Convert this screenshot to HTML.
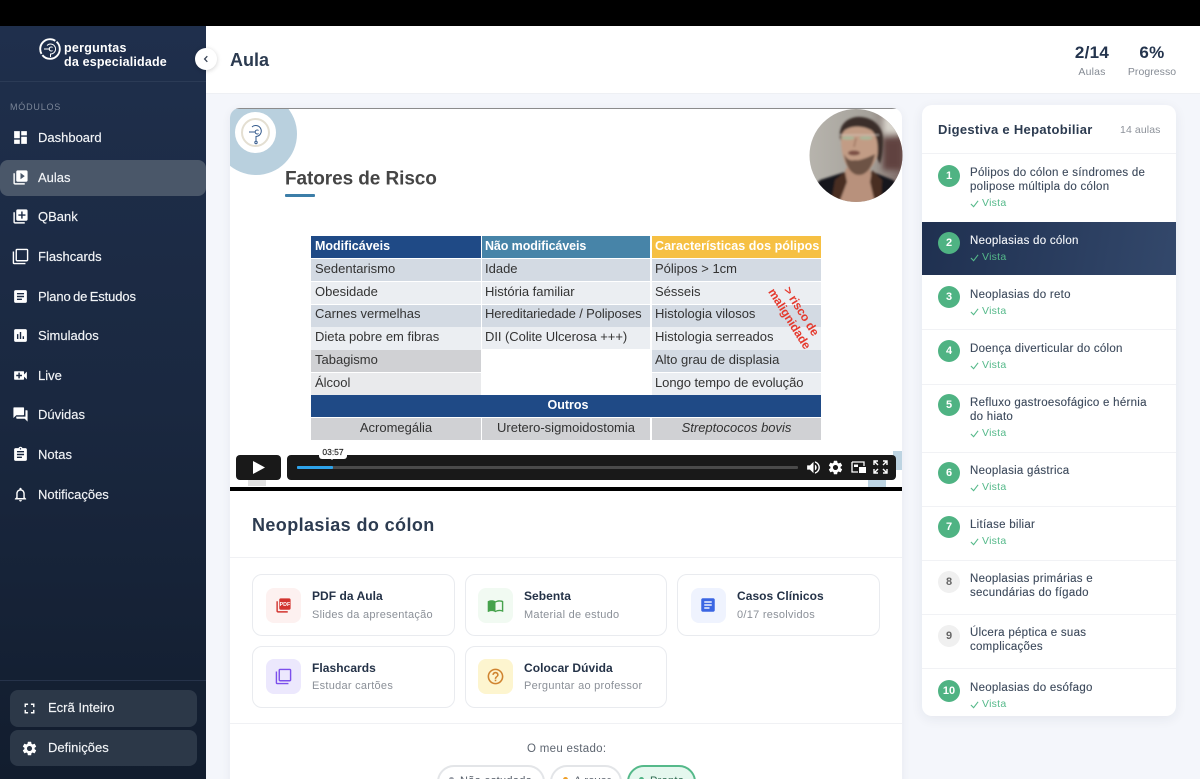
<!DOCTYPE html>
<html lang="pt"><head><meta charset="utf-8"><title>Aula</title>
<style>
*{box-sizing:border-box;margin:0;padding:0}
html,body{width:1200px;height:779px;overflow:hidden;background:#f4f6fb;font-family:"Liberation Sans",sans-serif}
#r{position:relative;width:1200px;height:779px;overflow:hidden}
.a{position:absolute}
.t{position:absolute;white-space:nowrap;line-height:20px;height:20px}
.nav{color:#f2f4f7;font-size:13px;letter-spacing:0;-webkit-text-stroke:.15px #f2f4f7}
.ic{position:absolute;width:17px;height:17px;fill:#fff}
.tb{position:absolute;white-space:nowrap;font-size:13px;color:#333;line-height:23px;height:23px;padding-left:4px}
.c{position:absolute;background:#d3dae3}
.btn{position:absolute;background:#fff;border:1px solid #e9ebef;border-radius:10px;width:203px;height:62px}
.bi{position:absolute;width:35px;height:35px;border-radius:8px}
.bt{position:absolute;white-space:nowrap;font-size:12px;font-weight:bold;color:#243247;line-height:20px;letter-spacing:.05px}
.bs{position:absolute;white-space:nowrap;font-size:11px;color:#8b9098;line-height:20px;letter-spacing:.27px}
.lt{position:absolute;white-space:nowrap;font-size:11.5px;color:#3d4a5c;line-height:14px;left:970px;letter-spacing:.27px;-webkit-text-stroke:.12px #3d4a5c}
.v{position:absolute;white-space:nowrap;font-size:10.5px;color:#55b98a;line-height:14px;left:982px;letter-spacing:.25px}
.ck{position:absolute;left:970px;width:9px;height:9px;fill:none;stroke:#55b98a;stroke-width:1.2}
.n{position:absolute;left:938px;width:22px;height:22px;border-radius:50%;background:#4fb383;color:#fff;font-size:11px;font-weight:bold;text-align:center;line-height:22px}
.n.g{background:#f0f0f0;color:#666}
.ln{position:absolute;left:922px;width:254px;height:1px;background:#f1f2f5}
</style></head><body><div id="r">

<div class="a" style="left:0;top:0;width:1200px;height:26px;background:#000"></div>

<!-- header -->
<div class="a" style="left:206px;top:26px;width:994px;height:68px;background:#fff;border-bottom:1px solid #eef0f4"></div>
<div class="t" style="left:230px;top:50px;font-size:18px;font-weight:bold;color:#2c3b50">Aula</div>
<div class="t" style="left:1062px;width:60px;text-align:center;top:43px;font-size:17px;font-weight:bold;color:#24344d;letter-spacing:.3px">2/14</div>
<div class="t" style="left:1062px;width:60px;text-align:center;top:62px;font-size:10.5px;color:#858b94;letter-spacing:.2px">Aulas</div>
<div class="t" style="left:1122px;width:60px;text-align:center;top:43px;font-size:17px;font-weight:bold;color:#24344d;letter-spacing:.3px">6%</div>
<div class="t" style="left:1122px;width:60px;text-align:center;top:62px;font-size:10.5px;color:#858b94;letter-spacing:.05px">Progresso</div>

<!-- sidebar -->
<div class="a" style="left:0;top:26px;width:206px;height:753px;background:linear-gradient(180deg,#1f2f4c 0%,#1a2840 50%,#121d2e 100%)"></div>
<div class="a" style="left:0;top:81px;width:206px;height:1px;background:#2b3b56"></div>
<svg class="a" style="left:38px;top:37px" width="24" height="24" viewBox="0 0 24 24" fill="none" stroke="#fff"><circle cx="12" cy="12" r="9.8" stroke-width="1.9" stroke-dasharray="24 1.5 26 1.5"/><path d="M9 8.5a5 5 0 1 1 3.5 8.5V20M6 12h6M14.5 10.5a2 2 0 1 0 0 3" stroke-width="1"/></svg>
<div class="t" style="left:64px;top:38px;font-size:12.5px;font-weight:bold;color:#fff;letter-spacing:.25px">perguntas</div>
<div class="t" style="left:64px;top:52px;font-size:12.5px;font-weight:bold;color:#fff;letter-spacing:.18px">da especialidade</div>
<div class="a" style="left:195px;top:48px;width:22px;height:22px;border-radius:50%;background:#fff;box-shadow:0 1px 5px rgba(0,0,0,.18)"></div>
<svg class="a" style="left:202px;top:55px" width="8" height="8" viewBox="0 0 8 8" fill="none" stroke="#3a4557" stroke-width="1.3"><path d="M5.3 1.2 2.6 4l2.7 2.8"/></svg>
<div class="t" style="left:10px;top:97px;font-size:9px;color:#7b8698;letter-spacing:.8px">MÓDULOS</div>

<div class="a" style="left:0;top:160px;width:206px;height:36px;border-radius:8px;background:#4a5769"></div>

<svg class="ic" style="left:12px;top:129px" viewBox="0 0 24 24"><path d="M3 13h8V3H3v10zm0 8h8v-6H3v6zm10 0h8V11h-8v10zm0-18v6h8V3h-8z"/></svg>
<div class="t nav" style="left:38px;top:128px">Dashboard</div>
<svg class="ic" style="left:12px;top:169px" viewBox="0 0 24 24"><path d="M4 6H2v14c0 1.1.9 2 2 2h14v-2H4V6zm16-4H8c-1.1 0-2 .9-2 2v12c0 1.1.9 2 2 2h12c1.1 0 2-.9 2-2V4c0-1.1-.9-2-2-2zm-8 12.5v-9l6 4.5-6 4.5z"/></svg>
<div class="t nav" style="left:38px;top:168px">Aulas</div>
<svg class="ic" style="left:12px;top:208px" viewBox="0 0 24 24"><path d="M4 6H2v14c0 1.1.9 2 2 2h14v-2H4V6zm16-4H8c-1.1 0-2 .9-2 2v12c0 1.1.9 2 2 2h12c1.1 0 2-.9 2-2V4c0-1.1-.9-2-2-2zm-1 9h-4v4h-2v-4H9V9h4V5h2v4h4v2z"/></svg>
<div class="t nav" style="left:38px;top:207px">QBank</div>
<svg class="ic" style="left:12px;top:248px" viewBox="0 0 24 24"><path d="M3 5H1v16c0 1.1.9 2 2 2h16v-2H3V5zm18-4H7c-1.1 0-2 .9-2 2v14c0 1.1.9 2 2 2h14c1.1 0 2-.9 2-2V3c0-1.1-.9-2-2-2zm0 16H7V3h14v14z"/></svg>
<div class="t nav" style="left:38px;top:247px">Flashcards</div>
<svg class="ic" style="left:12px;top:288px" viewBox="0 0 24 24"><path d="M19 3H5c-1.1 0-2 .9-2 2v14c0 1.1.9 2 2 2h14c1.1 0 2-.9 2-2V5c0-1.1-.9-2-2-2zm-5 14H7v-2h7v2zm3-4H7v-2h10v2zm0-4H7V7h10v2z"/></svg>
<div class="t nav" style="left:38px;top:287px;letter-spacing:-.13px;word-spacing:-1px">Plano de Estudos</div>
<svg class="ic" style="left:12px;top:327px" viewBox="0 0 24 24"><path d="M19 3H5c-1.1 0-2 .9-2 2v14c0 1.1.9 2 2 2h14c1.1 0 2-.9 2-2V5c0-1.1-.9-2-2-2zM9 17H7v-7h2v7zm4 0h-2V7h2v10zm4 0h-2v-4h2v4z"/></svg>
<div class="t nav" style="left:38px;top:326px">Simulados</div>
<svg class="ic" style="left:12px;top:367px" viewBox="0 0 24 24"><path d="M17 10.5V7c0-.55-.45-1-1-1H4c-.55 0-1 .45-1 1v10c0 .55.45 1 1 1h12c.55 0 1-.45 1-1v-3.5l4 4v-11l-4 4zM14 13h-3v3H9v-3H6v-2h3V8h2v3h3v2z"/></svg>
<div class="t nav" style="left:38px;top:366px">Live</div>
<svg class="ic" style="left:12px;top:406px" viewBox="0 0 24 24"><path d="M21 6h-2v9H6v2c0 .55.45 1 1 1h11l4 4V7c0-.55-.45-1-1-1zm-4 6V3c0-.55-.45-1-1-1H3c-.55 0-1 .45-1 1v14l4-4h10c.55 0 1-.45 1-1z"/></svg>
<div class="t nav" style="left:38px;top:405px">Dúvidas</div>
<svg class="ic" style="left:12px;top:446px" viewBox="0 0 24 24"><path d="M19 3h-4.18C14.4 1.84 13.3 1 12 1c-1.3 0-2.4.84-2.82 2H5c-1.1 0-2 .9-2 2v14c0 1.1.9 2 2 2h14c1.1 0 2-.9 2-2V5c0-1.1-.9-2-2-2zm-7 0c.55 0 1 .45 1 1s-.45 1-1 1-1-.45-1-1 .45-1 1-1zm2 14H7v-2h7v2zm3-4H7v-2h10v2zm0-4H7V7h10v2z"/></svg>
<div class="t nav" style="left:38px;top:445px">Notas</div>
<svg class="ic" style="left:12px;top:486px" viewBox="0 0 24 24"><path d="M12 22c1.1 0 2-.9 2-2h-4c0 1.1.9 2 2 2zm6-6v-5c0-3.07-1.63-5.64-4.5-6.32V4c0-.83-.67-1.5-1.5-1.5s-1.5.67-1.5 1.5v.68C7.64 5.36 6 7.92 6 11v5l-2 2v1h16v-1l-2-2zm-2 1H8v-6c0-2.48 1.51-4.5 4-4.5s4 2.02 4 4.5v6z"/></svg>
<div class="t nav" style="left:38px;top:485px">Notificações</div>

<div class="a" style="left:0;top:680px;width:206px;height:1px;background:#26334a"></div>
<div class="a" style="left:10px;top:690px;width:187px;height:37px;border-radius:8px;background:#2c3848"></div>
<div class="a" style="left:10px;top:730px;width:187px;height:36px;border-radius:8px;background:#2c3848"></div>
<svg class="ic" style="left:21px;top:700px" viewBox="0 0 24 24"><path d="M7 14H5v5h5v-2H7v-3zm-2-4h2V7h3V5H5v5zm12 7h-3v2h5v-5h-2v3zM14 5v2h3v3h2V5h-5z"/></svg>
<div class="t nav" style="left:48px;top:698px">Ecrã Inteiro</div>
<svg class="ic" style="left:21px;top:740px" viewBox="0 0 24 24"><path d="M19.14 12.94c.04-.3.06-.61.06-.94 0-.32-.02-.64-.07-.94l2.03-1.58a.49.49 0 0 0 .12-.61l-1.92-3.32a.488.488 0 0 0-.59-.22l-2.39.96c-.5-.38-1.03-.7-1.62-.94l-.36-2.54a.484.484 0 0 0-.48-.41h-3.84c-.24 0-.43.17-.47.41l-.36 2.54c-.59.24-1.13.57-1.62.94l-2.39-.96c-.22-.08-.47 0-.59.22L2.74 8.87c-.12.21-.08.47.12.61l2.03 1.58c-.05.3-.09.63-.09.94s.02.64.07.94l-2.03 1.58a.49.49 0 0 0-.12.61l1.92 3.32c.12.22.37.29.59.22l2.39-.96c.5.38 1.03.7 1.62.94l.36 2.54c.05.24.24.41.48.41h3.84c.24 0 .44-.17.47-.41l.36-2.54c.59-.24 1.13-.56 1.62-.94l2.39.96c.22.08.47 0 .59-.22l1.92-3.32c.12-.22.07-.47-.12-.61l-2.01-1.58zM12 15.6c-1.98 0-3.6-1.62-3.6-3.6s1.62-3.6 3.6-3.6 3.6 1.62 3.6 3.6-1.62 3.6-3.6 3.6z"/></svg>
<div class="t nav" style="left:48px;top:738px">Definições</div>

<!-- main card -->
<div class="a" style="left:230px;top:108px;width:672px;height:690px;background:#fff;border-radius:10px 10px 0 0;box-shadow:0 2px 10px rgba(30,40,70,.06);overflow:hidden">
  <div class="a" style="left:-15px;top:-15px;width:82px;height:82px;border-radius:50%;background:#b9d0de"></div>
  <div class="a" style="left:5px;top:4px;width:41px;height:41px;border-radius:50%;background:#fff"></div>
  <div class="a" style="left:11px;top:10px;width:29px;height:29px;border-radius:50%;border:2.5px solid #e4dfd2"></div>
  <svg class="a" style="left:14px;top:12px" width="24" height="26" viewBox="0 0 24 26" fill="none" stroke="#33598c" stroke-width="1"><path d="M8 7a5.5 5.5 0 1 1 4 9.5V21M5 12h6M14.5 10.5a2 2 0 1 0 0 3"/><circle cx="12" cy="22.5" r="1.2"/></svg>
  <div class="a" style="left:0;top:0;width:672px;height:1px;background:#8c8c8c"></div>
</div>
<div class="t" style="left:285px;top:168.5px;font-size:19px;font-weight:bold;color:#454545;letter-spacing:-.08px;transform:translateY(.5px)">Fatores de Risco</div>
<div class="a" style="left:285px;top:194px;width:30px;height:3px;border-radius:1px;background:#3c7ea8"></div>

<!-- avatar -->
<svg class="a" style="left:809px;top:108px" width="94" height="95" viewBox="0 0 94 95">
<defs>
<clipPath id="cp"><circle cx="47" cy="47.5" r="46.5"/></clipPath>
<filter id="b1" x="-30%" y="-30%" width="160%" height="160%"><feGaussianBlur stdDeviation="1"/></filter>
<filter id="b2" x="-30%" y="-30%" width="160%" height="160%"><feGaussianBlur stdDeviation="3"/></filter>
<linearGradient id="bg" x1="0" x2="1" y1="0" y2="0"><stop offset="0" stop-color="#b7b4ad"/><stop offset=".65" stop-color="#a5a19a"/><stop offset="1" stop-color="#7d6864"/></linearGradient>
</defs>
<g clip-path="url(#cp)">
<rect width="94" height="95" fill="url(#bg)"/>
<rect x="74" y="30" width="20" height="32" fill="#61423f" filter="url(#b2)"/>
<rect x="74" y="8" width="20" height="18" fill="#d7d3cb" filter="url(#b2)"/>
<g filter="url(#b1)">
<path d="M0 84 11 72 36 64H64L84 72 94 82V95H0Z" fill="#14171f"/>
<path d="M37 60H61L64 75 66 95H30L34 75Z" fill="#b8917b"/>
<path d="M36 64 26 72 22 95H30L38 74Z" fill="#4a2f22"/>
<path d="M63 62 73 72 72 95H66L61 74Z" fill="#4a2f22"/>
<path d="M32 30C32 16 40 12 52 12 64 12 70 22 70 34 70 50 62 66 50 66 38 66 32 50 32 30Z" fill="#c29c85"/>
<path d="M35 46C38 52 42 53 46 52 50 53 58 50 66 46 64 58 58 67 50 67 42 67 37 58 35 46Z" fill="#6d5344"/>
<path d="M31 30C29 16 40 8 52 9 66 10 75 20 74 34 74 42 73 50 71 56L68 50C70 38 68 26 62 22 52 17 42 18 36 22 33 25 32 27 32 33Z" fill="#3a2f29"/>
<ellipse cx="45" cy="45" rx="6" ry="2.5" fill="#7c4f44"/>
<ellipse cx="39" cy="30" rx="6.5" ry="1.8" fill="#a9b89a"/><ellipse cx="57" cy="30" rx="6.5" ry="1.8" fill="#a9b89a"/>
<path d="M31 27H70" stroke="#d9cfc6" stroke-width=".8"/>
<path d="M47 30 45 39" stroke="#a9816c" stroke-width="2"/>
</g>
</g>
</svg>

<!-- slide table -->
<div class="c" style="left:311px;top:236px;width:170px;height:22px;background:#1f4a86"></div>
<div class="c" style="left:482px;top:236px;width:168px;height:22px;background:#4784a8"></div>
<div class="c" style="left:652px;top:236px;width:169px;height:22px;background:#f6c043"></div>
<div class="tb" style="left:311px;top:235px;color:#fff;font-weight:bold;font-size:12.5px">Modificáveis</div>
<div class="tb" style="left:481px;top:235px;color:#fff;font-weight:bold;font-size:12.5px;letter-spacing:-.1px">Não modificáveis</div>
<div class="tb" style="left:651px;top:235px;color:#fff;font-weight:bold;font-size:12.5px;letter-spacing:.04px">Características dos pólipos</div>

<div class="c" style="left:311px;top:259px;width:170px;height:22px"></div>
<div class="c" style="left:482px;top:259px;width:168px;height:22px"></div>
<div class="c" style="left:652px;top:259px;width:169px;height:22px"></div>
<div class="c" style="left:311px;top:282px;width:170px;height:22px;background:#ebeef2"></div>
<div class="c" style="left:482px;top:282px;width:168px;height:22px;background:#ebeef2"></div>
<div class="c" style="left:652px;top:282px;width:169px;height:22px;background:#ebeef2"></div>
<div class="c" style="left:311px;top:305px;width:170px;height:22px"></div>
<div class="c" style="left:482px;top:305px;width:168px;height:22px"></div>
<div class="c" style="left:652px;top:305px;width:169px;height:22px"></div>
<div class="c" style="left:311px;top:327px;width:170px;height:23px;background:#ebeef2"></div>
<div class="c" style="left:482px;top:327px;width:168px;height:22px;background:#ebeef2"></div>
<div class="c" style="left:652px;top:327px;width:169px;height:23px;background:#ebeef2"></div>
<div class="c" style="left:311px;top:350px;width:170px;height:22px;background:#d0d1d4"></div>
<div class="c" style="left:652px;top:350px;width:169px;height:22px"></div>
<div class="c" style="left:311px;top:373px;width:170px;height:22px;background:#e9eaec"></div>
<div class="c" style="left:652px;top:373px;width:169px;height:22px;background:#ebeef2"></div>
<div class="c" style="left:311px;top:395px;width:510px;height:22px;background:#1f4a86"></div>
<div class="c" style="left:311px;top:418px;width:170px;height:22px;background:#d0d1d4"></div>
<div class="c" style="left:482px;top:418px;width:168px;height:22px;background:#d0d1d4"></div>
<div class="c" style="left:652px;top:418px;width:169px;height:22px;background:#d0d1d4"></div>

<div class="tb" style="left:311px;top:257px">Sedentarismo</div>
<div class="tb" style="left:311px;top:280px">Obesidade</div>
<div class="tb" style="left:311px;top:302px">Carnes vermelhas</div>
<div class="tb" style="left:311px;top:325px">Dieta pobre em fibras</div>
<div class="tb" style="left:311px;top:348px">Tabagismo</div>
<div class="tb" style="left:311px;top:371px">Álcool</div>
<div class="tb" style="left:481px;top:257px">Idade</div>
<div class="tb" style="left:481px;top:280px">História familiar</div>
<div class="tb" style="left:481px;top:302px;letter-spacing:-.12px">Hereditariedade / Poliposes</div>
<div class="tb" style="left:481px;top:325px;letter-spacing:-.05px">DII (Colite Ulcerosa +++)</div>
<div class="tb" style="left:651px;top:257px">Pólipos &gt; 1cm</div>
<div class="tb" style="left:651px;top:280px">Sésseis</div>
<div class="tb" style="left:651px;top:302px">Histologia vilosos</div>
<div class="tb" style="left:651px;top:325px">Histologia serreados</div>
<div class="tb" style="left:651px;top:348px">Alto grau de displasia</div>
<div class="tb" style="left:651px;top:371px;letter-spacing:-.05px">Longo tempo de evolução</div>
<div class="tb" style="left:311px;width:510px;text-align:center;top:394px;color:#fff;font-weight:bold;font-size:12.5px">Outros</div>
<div class="tb" style="left:311px;width:170px;text-align:center;top:416px;padding:0">Acromegália</div>
<div class="tb" style="left:482px;width:168px;text-align:center;top:416px;padding:0">Uretero-sigmoidostomia</div>
<div class="tb" style="left:652px;width:169px;text-align:center;top:416px;padding:0;font-style:italic">Streptococos bovis</div>
<div class="a" style="left:743px;top:301px;width:105px;transform:rotate(58deg);transform-origin:center;text-align:center;color:#e5392d;font-weight:bold;font-size:12px;line-height:14px;letter-spacing:-.1px">&gt; risco de<br>malignidade</div>

<!-- player -->
<div class="a" style="left:248px;top:478px;width:18px;height:8px;background:#e1e1e1"></div>
<div class="a" style="left:868px;top:474px;width:18px;height:13px;background:#bdd4e2"></div>
<div class="a" style="left:893px;top:451px;width:9px;height:19px;background:#bdd4e2"></div>
<div class="a" style="left:230px;top:487px;width:672px;height:4px;background:#000"></div>
<div class="a" style="left:236px;top:455px;width:45px;height:25px;border-radius:4px;background:#191919"></div>
<svg class="a" style="left:252px;top:460px" width="14" height="15" viewBox="0 0 14 15"><path d="M1 1 13 7.5 1 14Z" fill="#fff"/></svg>
<div class="a" style="left:287px;top:455px;width:609px;height:25px;border-radius:4px;background:#191919"></div>
<div class="a" style="left:297px;top:466px;width:501px;height:3px;background:#4a4a4a;border-radius:1px"></div>
<div class="a" style="left:297px;top:466px;width:36px;height:3px;background:#2ea3ea;border-radius:1px"></div>
<div class="a" style="left:319px;top:446px;width:28px;height:13px;border-radius:3px;background:#fff"></div>
<div class="a" style="left:329px;top:457px;width:0;height:0;border-left:3px solid transparent;border-right:3px solid transparent;border-top:3px solid #fff"></div>
<div class="t" style="left:319px;width:28px;text-align:center;top:442px;font-size:8.5px;color:#222;-webkit-text-stroke:.15px #222">03:57</div>
<svg class="a" style="left:805px;top:459px;fill:#fff" width="17" height="17" viewBox="0 0 24 24"><path d="M3 9v6h4l5 5V4L7 9H3zm13.5 3c0-1.77-1.02-3.29-2.5-4.03v8.05c1.48-.73 2.5-2.25 2.5-4.02zM14 3.23v2.06c2.89.86 5 3.54 5 6.71s-2.11 5.85-5 6.71v2.06c4.01-.91 7-4.49 7-8.77s-2.99-7.86-7-8.77z"/></svg>
<svg class="a" style="left:827px;top:459px;fill:#fff" width="17" height="17" viewBox="0 0 24 24"><path d="M19.14 12.94c.04-.3.06-.61.06-.94 0-.32-.02-.64-.07-.94l2.03-1.58a.49.49 0 0 0 .12-.61l-1.92-3.32a.488.488 0 0 0-.59-.22l-2.39.96c-.5-.38-1.03-.7-1.62-.94l-.36-2.54a.484.484 0 0 0-.48-.41h-3.84c-.24 0-.43.17-.47.41l-.36 2.54c-.59.24-1.13.57-1.62.94l-2.39-.96c-.22-.08-.47 0-.59.22L2.74 8.87c-.12.21-.08.47.12.61l2.03 1.58c-.05.3-.09.63-.09.94s.02.64.07.94l-2.03 1.58a.49.49 0 0 0-.12.61l1.92 3.32c.12.22.37.29.59.22l2.39-.96c.5.38 1.03.7 1.62.94l.36 2.54c.05.24.24.41.48.41h3.84c.24 0 .44-.17.47-.41l.36-2.54c.59-.24 1.13-.56 1.62-.94l2.39.96c.22.08.47 0 .59-.22l1.92-3.32c.12-.22.07-.47-.12-.61l-2.01-1.58zM12 15.6c-1.98 0-3.6-1.62-3.6-3.6s1.62-3.6 3.6-3.6 3.6 1.62 3.6 3.6-1.62 3.6-3.6 3.6z"/></svg>
<svg class="a" style="left:851px;top:461px" width="15" height="13" viewBox="0 0 15 13"><path d="M1 1H13V5M1 1V11H7" fill="none" stroke="#fff" stroke-width="1.3"/><rect x="8" y="6" width="7" height="6" fill="#fff"/><rect x="3" y="3.5" width="4" height="2.5" fill="#fff"/></svg>
<svg class="a" style="left:873px;top:460px" width="15" height="14" viewBox="0 0 15 14" fill="none" stroke="#fff" stroke-width="1.4"><path d="M1 5V1H5M1 1 5 5M14 5V1H10M14 1 10 5M1 9V13H5M1 13 5 9M14 9V13H10M14 13 10 9"/></svg>

<!-- title / actions -->
<div class="t" style="left:252px;top:515px;font-size:18px;font-weight:bold;color:#2c3b50;letter-spacing:.4px">Neoplasias do cólon</div>
<div class="a" style="left:230px;top:557px;width:672px;height:1px;background:#f0f1f4"></div>

<div class="btn" style="left:252px;top:574px"></div>
<div class="btn" style="left:465px;top:574px;width:202px"></div>
<div class="btn" style="left:677px;top:574px"></div>
<div class="btn" style="left:252px;top:646px"></div>
<div class="btn" style="left:465px;top:646px;width:202px"></div>

<div class="bi" style="left:266px;top:588px;background:#fdf1f0"></div>
<svg class="a" style="left:275px;top:597px" width="17" height="17" viewBox="0 0 24 24" fill="#d2342f"><path d="M20 2H8c-1.1 0-2 .9-2 2v12c0 1.1.9 2 2 2h12c1.1 0 2-.9 2-2V4c0-1.1-.9-2-2-2zM4 6H2v14c0 1.1.9 2 2 2h14v-2H4V6z"/><text x="14" y="13" text-anchor="middle" font-family="Liberation Sans" font-size="7.5" font-weight="bold" fill="#fff">PDF</text></svg>
<div class="bi" style="left:478px;top:588px;background:#f1faf2"></div>
<svg class="a" style="left:487px;top:597px" width="17" height="17" viewBox="0 0 24 24" fill="#46a24c"><path d="M21 5c-1.11-.35-2.33-.5-3.5-.5-1.95 0-4.05.4-5.5 1.5-1.45-1.1-3.55-1.5-5.5-1.5S2.45 4.9 1 6v14.65c0 .25.25.5.5.5.1 0 .15-.05.25-.05C3.1 20.45 5.05 20 6.5 20c1.95 0 4.05.4 5.5 1.5 1.35-.85 3.8-1.5 5.5-1.5 1.65 0 3.35.3 4.75 1.05.1.05.15.05.25.05.25 0 .5-.25.5-.5V6c-.6-.45-1.25-.75-2-1zm0 13.5c-1.1-.35-2.3-.5-3.5-.5-1.7 0-4.15.65-5.5 1.5V8c1.35-.85 3.8-1.5 5.5-1.5 1.2 0 2.4.15 3.5.5v11.5z"/></svg>
<div class="bi" style="left:691px;top:588px;background:#eff3fe"></div>
<svg class="a" style="left:699px;top:596px" width="18" height="18" viewBox="0 0 24 24" fill="#3b66e3"><path d="M19 3H5c-1.1 0-2 .9-2 2v14c0 1.1.9 2 2 2h14c1.1 0 2-.9 2-2V5c0-1.1-.9-2-2-2zm-5 14H7v-2h7v2zm3-4H7v-2h10v2zm0-4H7V7h10v2z"/></svg>
<div class="bi" style="left:266px;top:659px;background:#ece8fd"></div>
<svg class="a" style="left:275px;top:668px" width="17" height="17" viewBox="0 0 24 24" fill="#7c4fec"><path d="M3 5H1v16c0 1.1.9 2 2 2h16v-2H3V5zm18-4H7c-1.1 0-2 .9-2 2v14c0 1.1.9 2 2 2h14c1.1 0 2-.9 2-2V3c0-1.1-.9-2-2-2zm0 16H7V3h14v14z"/></svg>
<div class="bi" style="left:478px;top:659px;background:#fdf5cf"></div>
<svg class="a" style="left:486px;top:667px" width="19" height="19" viewBox="0 0 24 24" fill="#d08430"><path d="M11 18h2v-2h-2v2zm1-16C6.48 2 2 6.48 2 12s4.48 10 10 10 10-4.48 10-10S17.52 2 12 2zm0 18c-4.41 0-8-3.59-8-8s3.59-8 8-8 8 3.59 8 8-3.59 8-8 8zm0-14c-2.21 0-4 1.79-4 4h2c0-1.1.9-2 2-2s2 .9 2 2c0 2-3 1.75-3 5h2c0-2.25 3-2.5 3-5 0-2.21-1.79-4-4-4z"/></svg>

<div class="bt" style="left:312px;top:586px">PDF da Aula</div>
<div class="bs" style="left:312px;top:605px">Slides da apresentação</div>
<div class="bt" style="left:524px;top:586px">Sebenta</div>
<div class="bs" style="left:524px;top:605px">Material de estudo</div>
<div class="bt" style="left:737px;top:586px">Casos Clínicos</div>
<div class="bs" style="left:737px;top:605px">0/17 resolvidos</div>
<div class="bt" style="left:312px;top:658px">Flashcards</div>
<div class="bs" style="left:312px;top:676px">Estudar cartões</div>
<div class="bt" style="left:524px;top:658px">Colocar Dúvida</div>
<div class="bs" style="left:524px;top:676px">Perguntar ao professor</div>

<div class="a" style="left:230px;top:723px;width:672px;height:1px;background:#f0f1f4"></div>
<div class="t" style="left:527px;top:739px;font-size:11.5px;color:#5d6570;letter-spacing:.3px">O meu estado:</div>
<div class="a" style="left:437px;top:765px;width:108px;height:34px;border-radius:17px;border:2px solid #e3e5e8;background:#fff"></div>
<div class="a" style="left:550px;top:765px;width:72px;height:34px;border-radius:17px;border:2px solid #e3e5e8;background:#fff"></div>
<div class="a" style="left:627px;top:765px;width:69px;height:34px;border-radius:17px;border:2px solid #55b98a;background:#e5f7ee"></div>
<div class="a" style="left:449px;top:777px;width:5px;height:5px;border-radius:50%;background:#9a9fa8"></div>
<div class="a" style="left:563px;top:777px;width:5px;height:5px;border-radius:50%;background:#ef9f27"></div>
<div class="a" style="left:639px;top:777px;width:5px;height:5px;border-radius:50%;background:#4fb383"></div>
<div class="t" style="left:460px;top:771px;font-size:11px;color:#555d68;letter-spacing:.3px">Não estudado</div>
<div class="t" style="left:574px;top:771px;font-size:11px;color:#555d68;letter-spacing:.3px">A rever</div>
<div class="t" style="left:650px;top:771px;font-size:11px;color:#2f6b50;letter-spacing:.3px">Pronto</div>

<!-- right panel -->
<div class="a" style="left:922px;top:105px;width:254px;height:611px;background:#fff;border-radius:10px;box-shadow:0 3px 12px rgba(30,40,70,.07)"></div>
<div class="t" style="left:938px;top:120px;font-size:13px;font-weight:bold;color:#2c3b50;letter-spacing:.3px">Digestiva e Hepatobiliar</div>
<div class="t" style="left:1120px;top:120px;font-size:10.5px;color:#8d929a;letter-spacing:.1px">14 aulas</div>
<div class="ln" style="top:153px"></div>
<div class="a" style="left:922px;top:222px;width:254px;height:53px;background:linear-gradient(100deg,#1f3050,#33486b)"></div>
<div class="ln" style="top:329px"></div><div class="ln" style="top:384px"></div><div class="ln" style="top:452px"></div><div class="ln" style="top:506px"></div><div class="ln" style="top:560px"></div><div class="ln" style="top:614px"></div><div class="ln" style="top:668px"></div>

<div class="n" style="top:165px">1</div>
<div class="lt" style="top:166px">Pólipos do cólon e síndromes de</div>
<div class="lt" style="top:180px">polipose múltipla do cólon</div>
<svg class="ck" style="top:199px" viewBox="0 0 10 10"><path d="M1 5.5 4 8.5 9 2"/></svg><div class="v" style="top:196px">Vista</div>

<div class="n" style="top:232px">2</div>
<div class="lt" style="top:234px;color:#f4f6fa;-webkit-text-stroke:.12px #f4f6fa">Neoplasias do cólon</div>
<svg class="ck" style="top:253px" viewBox="0 0 10 10"><path d="M1 5.5 4 8.5 9 2"/></svg><div class="v" style="top:250px">Vista</div>

<div class="n" style="top:286px">3</div>
<div class="lt" style="top:288px">Neoplasias do reto</div>
<svg class="ck" style="top:307px" viewBox="0 0 10 10"><path d="M1 5.5 4 8.5 9 2"/></svg><div class="v" style="top:304px">Vista</div>

<div class="n" style="top:340px">4</div>
<div class="lt" style="top:342px">Doença diverticular do cólon</div>
<svg class="ck" style="top:361px" viewBox="0 0 10 10"><path d="M1 5.5 4 8.5 9 2"/></svg><div class="v" style="top:358px">Vista</div>

<div class="n" style="top:394px">5</div>
<div class="lt" style="top:396px">Refluxo gastroesofágico e hérnia</div>
<div class="lt" style="top:410px">do hiato</div>
<svg class="ck" style="top:429px" viewBox="0 0 10 10"><path d="M1 5.5 4 8.5 9 2"/></svg><div class="v" style="top:426px">Vista</div>

<div class="n" style="top:462px">6</div>
<div class="lt" style="top:464px">Neoplasia gástrica</div>
<svg class="ck" style="top:483px" viewBox="0 0 10 10"><path d="M1 5.5 4 8.5 9 2"/></svg><div class="v" style="top:480px">Vista</div>

<div class="n" style="top:516px">7</div>
<div class="lt" style="top:518px">Litíase biliar</div>
<svg class="ck" style="top:537px" viewBox="0 0 10 10"><path d="M1 5.5 4 8.5 9 2"/></svg><div class="v" style="top:534px">Vista</div>

<div class="n g" style="top:571px">8</div>
<div class="lt" style="top:572px">Neoplasias primárias e</div>
<div class="lt" style="top:586px">secundárias do fígado</div>

<div class="n g" style="top:625px">9</div>
<div class="lt" style="top:626px">Úlcera péptica e suas</div>
<div class="lt" style="top:640px">complicações</div>

<div class="n" style="top:680px">10</div>
<div class="lt" style="top:681px">Neoplasias do esófago</div>
<svg class="ck" style="top:700px" viewBox="0 0 10 10"><path d="M1 5.500 4 8.500 9 2"/></svg><div class="v" style="top:697px">Vista</div>

</div></body></html>
